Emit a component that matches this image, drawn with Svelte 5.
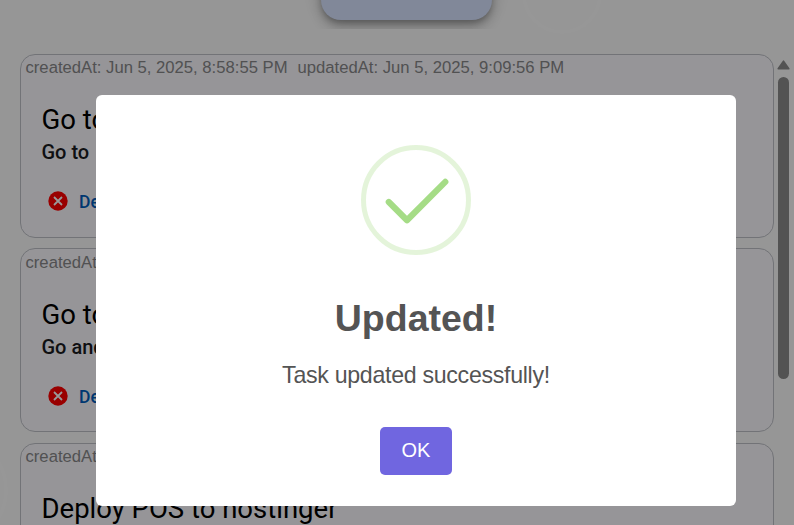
<script>
  const tasks = [
    { created: 'Jun 5, 2025, 8:58:55 PM', updated: 'Jun 5, 2025, 9:09:56 PM', title: 'Go to', detail: 'Go to' },
    { created: '', updated: '', title: 'Go to', detail: 'Go and' },
    { created: '', updated: '', title: 'Deploy POS to hostinger', detail: '' }
  ];
</script>

<div class="page">
  <div class="actions"><button class="add" aria-label="Add"></button></div>
  <div class="board">
    <div class="list">
      {#each tasks as task}
        <article class="card">
          <div class="dates">
            <span>createdAt: {task.created}</span>
            {#if task.updated}<span>updatedAt: {task.updated}</span>{/if}
          </div>
          <h2>{task.title}</h2>
          {#if task.detail}
            <h3>{task.detail}</h3>
            <div class="delete">
              <svg width="20" height="20" viewBox="0 0 20 20">
                <circle cx="10" cy="10" r="9.7" fill="#ff0000" />
                <path d="M6 6L14 14M14 6L6 14" stroke="#fff" stroke-width="1.8" />
              </svg>
              <span>Delete</span>
            </div>
          {/if}
        </article>
      {/each}
    </div>
    <div class="scrollbar">
      <svg width="13" height="10" viewBox="0 0 13 10"><path d="M6.5 1.2L11.8 8.8H1.2Z" fill="#8b8b8b" stroke="#8b8b8b" stroke-width="1.6" stroke-linejoin="round" /></svg>
      <div class="thumb"></div>
    </div>
  </div>
  <svg class="rings" width="794" height="525" viewBox="0 0 794 525" fill="none" stroke="#fff" stroke-opacity=".25" stroke-width="4">
    <circle cx="562" cy="-6" r="38" />
    <circle cx="-50" cy="490" r="56" />
  </svg>
</div>

<div class="overlay">
  <div class="modal" role="dialog" aria-modal="true">
    <svg class="tick" width="110" height="110" viewBox="0 0 110 110" fill="none">
      <circle cx="55" cy="55" r="52.5" stroke="#a5dc86" stroke-opacity=".3" stroke-width="5" />
      <path d="M27.8 57L46 75.2L84.3 36.9" stroke="#a5dc86" stroke-width="6.2" stroke-linecap="round" stroke-linejoin="round" />
    </svg>
    <h1>Updated!</h1>
    <p>Task updated successfully!</p>
    <button class="ok">OK</button>
  </div>
</div>

<style>
  :global(body) { overflow: hidden; }
  .page, .overlay { box-sizing: border-box; width: 794px; height: 525px; overflow: hidden; }
  .page { position: relative; background: #fbfbfb; }
  .actions { height: 29px; padding-left: 21px; padding-right: 2px; display: flex; justify-content: center; overflow: hidden; }
  .add {
    width: 171px; height: 70px; margin-top: -50px; border: 0; border-radius: 20px;
    background: #d7e3ff;
    box-shadow: 0 4px 6px -1px rgba(0, 0, 0, .25), 0 7px 13px rgba(0, 0, 0, .17), 0 1px 22px rgba(0, 0, 0, .13);
  }
  .board { display: flex; padding: 25px 4px 0 20px; gap: 3px; }
  .list { width: 754px; flex: none; display: flex; flex-direction: column; gap: 10.4px; }
  .card {
    box-sizing: border-box; height: 184px; flex: none; overflow: hidden;
    border: 1px solid #bec0c7; border-radius: 15px; background: #faf9fd;
    font-family: Roboto, sans-serif;
  }
  .dates {
    display: flex; gap: 10px; padding: 3.2px 0 0 4.5px; height: 20px;
    font: 16.67px/20px "Liberation Sans", Arial, sans-serif; color: #878789; white-space: nowrap;
  }
  h2 { margin: 24px 0 0 20.5px; font-size: 27.5px; line-height: 35px; font-weight: 400; color: #000; white-space: nowrap; }
  h3 { margin: 3px 0 0 20.5px; height: 25px; font-size: 20px; line-height: 25px; font-weight: 500; color: #1a1b1f; white-space: nowrap; }
  .delete { display: flex; align-items: center; gap: 11px; height: 30px; margin: 21.3px 0 0 27px; font-size: 17.5px; font-weight: 500; color: #005cbb; }
  .delete span { position: relative; top: 1px; }
  .scrollbar { width: 13px; display: flex; flex-direction: column; align-items: center; padding-top: 6px; gap: 7px; height: 340px; }
  .thumb { width: 11px; height: 302px; border-radius: 6px; background: #8b8b8b; }
  .rings { position: absolute; inset: 0; }
  .overlay { position: fixed; inset: 0; background: rgba(0, 0, 0, .4); padding: 95px 58px 19px 96px; }
  .modal {
    box-sizing: border-box; width: 640px; height: 411px; background: #fff; border-radius: 6px;
    display: flex; flex-direction: column; align-items: center; padding-top: 50px;
    font-family: "Liberation Sans", Arial, sans-serif; color: #545454;
  }
  .tick { flex: none; }
  h1 { margin: 41px 0 0; font-size: 37.5px; line-height: 44px; font-weight: 700; }
  p { margin: 22px 0 0; font-size: 23.2px; line-height: 26px; letter-spacing: -.31px; }
  .ok { width: 72px; height: 48px; margin-top: 39px; padding: 0 0 2px; border: 0; border-radius: 5px; background: #7066e0; color: #fff; font: 20px/44px "Liberation Sans", Arial, sans-serif; }
</style>
